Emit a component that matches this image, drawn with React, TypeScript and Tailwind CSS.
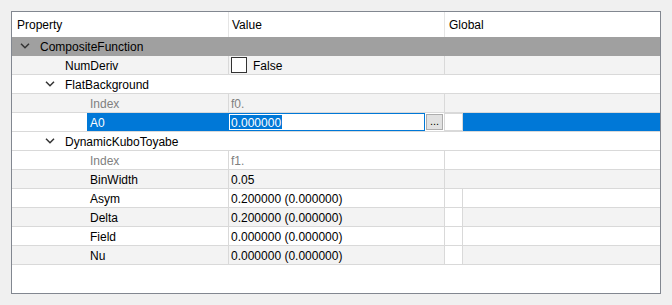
import React from 'react'

const font = { fontFamily: '"Liberation Sans", Arial, sans-serif' }

function Chevron() {
  return (
    <svg width="10" height="6" viewBox="0 0 10 6" className="block">
      <path d="M1 0.8 L5 4.8 L9 0.8" fill="none" stroke="#333333" strokeWidth="1.5" />
    </svg>
  )
}

// group row: chevron + caption across the whole width
function GroupRow({ level, label, bg }: { level: number; label: string; bg: string }) {
  return (
    <div className={`h-[19px] flex items-center border-b ${bg}`}>
      <div style={{ width: 25 * level }} className="shrink-0" />
      <div className="w-[25px] shrink-0 flex justify-center pl-[1px]">
        <Chevron />
      </div>
      <span className="pl-[3px] pt-[2px] text-black">{label}</span>
    </div>
  )
}

function LeafRow({
  level,
  label,
  value,
  bg,
  dim,
  global,
}: {
  level: number
  label: string
  value: React.ReactNode
  bg: string
  dim?: boolean
  global?: boolean
}) {
  const txt = dim ? 'text-[#808080]' : 'text-black'
  return (
    <div className={`h-[19px] flex border-b border-[#d9d9d9] ${bg}`}>
      <div className="w-[217px] shrink-0 flex items-center border-r border-[#d9d9d9]">
        <div style={{ width: 25 * level + 25 }} className="shrink-0" />
        <span className={`pl-[3px] pt-[2px] ${txt}`}>{label}</span>
      </div>
      <div className={`w-[216px] shrink-0 flex items-center border-r border-[#d9d9d9] pl-[2px] pt-[2px] ${txt}`}>
        {value}
      </div>
      <div className="flex-1 flex">
        {global && <div className="w-[18px] h-full bg-white border-r border-[#d9d9d9]" />}
      </div>
    </div>
  )
}

export default function App() {
  return (
    <div className="w-[672px] h-[305px] bg-[#f0f0f0] p-[11px] text-[12px] leading-none" style={font}>
      <div className="h-[283px] border border-[#828790] bg-white flex flex-col overflow-hidden">
        {/* header */}
        <div className="h-[25px] flex shrink-0 text-black">
          <div className="w-[217px] border-r border-[#e5e5e5] flex items-center pl-[5px]">Property</div>
          <div className="w-[216px] border-r border-[#e5e5e5] flex items-center pl-[3px]">Value</div>
          <div className="flex-1 flex items-center pl-[4px]">Global</div>
        </div>

        <GroupRow level={0} label="CompositeFunction" bg="bg-[#a0a0a0] border-[#a0a0a0]" />
        <LeafRow
          level={1}
          label="NumDeriv"
          bg="bg-[#f3f3f3]"
          value={
            <div className="flex items-center mt-[-2px]">
              <div className="w-[16px] h-[16px] border border-[#333333] bg-white" />
              <span className="pl-[6px] pt-[2px]">False</span>
            </div>
          }
        />
        <GroupRow level={1} label="FlatBackground" bg="bg-white border-[#d9d9d9]" />
        <LeafRow level={2} label="Index" value="f0." bg="bg-[#f3f3f3]" dim />

        {/* selected row with open editor */}
        <div className="h-[19px] flex border-b border-[#d9d9d9] bg-white">
          <div className="w-[75px] shrink-0" />
          <div className="w-[141px] shrink-0 bg-[#0078d7] text-white flex items-center pl-[3px] pt-[2px]">A0</div>
          <div className="w-[197px] shrink-0 border border-[#0078d7] bg-white flex items-center pl-[1px]">
            <span className="bg-[#0078d7] text-white h-[14px] flex items-center pl-[1px] pr-[1px] pt-[1px]">0.000000</span>
          </div>
          <div className="w-[19px] shrink-0 flex items-center pl-[1px]">
            <div className="w-[17px] h-[16px] bg-[#e1e1e1] border border-[#adadad] flex items-end justify-center pb-[2px] text-[11px] text-black">
              ...
            </div>
          </div>
          <div className="w-[19px] shrink-0 bg-white border border-[#d9d9d9]" />
          <div className="flex-1 bg-[#0078d7]" />
        </div>

        <GroupRow level={1} label="DynamicKuboToyabe" bg="bg-white border-[#d9d9d9]" />
        <LeafRow level={2} label="Index" value="f1." bg="bg-white" dim />
        <LeafRow level={2} label="BinWidth" value="0.05" bg="bg-[#f3f3f3]" />
        <LeafRow level={2} label="Asym" value="0.200000 (0.000000)" bg="bg-white" global />
        <LeafRow level={2} label="Delta" value="0.200000 (0.000000)" bg="bg-[#f3f3f3]" global />
        <LeafRow level={2} label="Field" value="0.000000 (0.000000)" bg="bg-white" global />
        <LeafRow level={2} label="Nu" value="0.000000 (0.000000)" bg="bg-[#f3f3f3]" global />
      </div>
    </div>
  )
}
